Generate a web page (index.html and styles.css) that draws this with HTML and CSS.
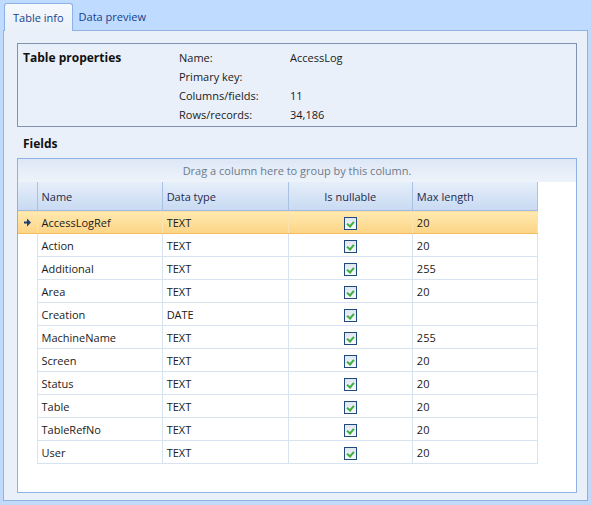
FILE: index.html
```html
<!DOCTYPE html>
<html lang="en">
<head>
  <meta charset="UTF-8">
  <title>Table info</title>
  <link rel="stylesheet" href="styles.css">
</head>
<body>
  <div class="tabs">
    <div class="tab active">Table info</div>
    <div class="tab">Data preview</div>
  </div>

  <div class="panel">
    <div class="props">
      <div class="props-title">Table properties</div>
      <div class="props-list">
        <div class="prop"><span class="prop-label">Name:</span><span>AccessLog</span></div>
        <div class="prop"><span class="prop-label">Primary key:</span><span></span></div>
        <div class="prop"><span class="prop-label">Columns/fields:</span><span>11</span></div>
        <div class="prop"><span class="prop-label">Rows/records:</span><span>34,186</span></div>
      </div>
    </div>

    <div class="fields-title">Fields</div>

    <div class="grid">
      <div class="group-panel">Drag a column here to group by this column.</div>
      <table class="fields">
        <colgroup>
          <col class="c-ind">
          <col class="c-name">
          <col class="c-type">
          <col class="c-null">
          <col class="c-len">
        </colgroup>
        <thead>
          <tr>
            <th class="ind"></th>
            <th>Name</th>
            <th>Data type</th>
            <th class="center">Is nullable</th>
            <th>Max length</th>
          </tr>
        </thead>
        <tbody>
          <tr class="selected">
            <td class="ind"><svg width="7" height="9" viewBox="0 0 7 9"><path d="M0 3.5h3V0.5L7 4.5 3 8.5V5.5H0z" fill="#1b3f73"/></svg></td>
            <td>AccessLogRef</td><td>TEXT</td><td class="center"><span class="check"></span></td><td>20</td>
          </tr>
          <tr><td class="ind"></td><td>Action</td><td>TEXT</td><td class="center"><span class="check"></span></td><td>20</td></tr>
          <tr><td class="ind"></td><td>Additional</td><td>TEXT</td><td class="center"><span class="check"></span></td><td>255</td></tr>
          <tr><td class="ind"></td><td>Area</td><td>TEXT</td><td class="center"><span class="check"></span></td><td>20</td></tr>
          <tr><td class="ind"></td><td>Creation</td><td>DATE</td><td class="center"><span class="check"></span></td><td></td></tr>
          <tr><td class="ind"></td><td>MachineName</td><td>TEXT</td><td class="center"><span class="check"></span></td><td>255</td></tr>
          <tr><td class="ind"></td><td>Screen</td><td>TEXT</td><td class="center"><span class="check"></span></td><td>20</td></tr>
          <tr><td class="ind"></td><td>Status</td><td>TEXT</td><td class="center"><span class="check"></span></td><td>20</td></tr>
          <tr><td class="ind"></td><td>Table</td><td>TEXT</td><td class="center"><span class="check"></span></td><td>20</td></tr>
          <tr><td class="ind"></td><td>TableRefNo</td><td>TEXT</td><td class="center"><span class="check"></span></td><td>20</td></tr>
          <tr><td class="ind"></td><td>User</td><td>TEXT</td><td class="center"><span class="check"></span></td><td>20</td></tr>
        </tbody>
      </table>
    </div>
  </div>
</body>
</html>
```

FILE: styles.css
```css
body {
  margin: 0;
  height: 505px;
  font-family: 'Open Sans', 'Noto Sans', sans-serif;
  font-size: 11px;
  color: #1a1a1a;
  background: #c2dafa;
  display: flex;
  flex-direction: column;
}
.tabs {
  display: flex;
  align-items: flex-end;
  height: 30px;
  padding-left: 4px;
  background: #bfdbff;
}
.tab {
  height: 27px;
  line-height: 27px;
  padding: 0 6px;
  color: #15428b;
}
.tab.active {
  height: 27px;
  padding: 0 8px;
  border: 1px solid #8db2e3;
  border-bottom: none;
  border-radius: 3px 3px 0 0;
  background: linear-gradient(#f6f9fd, #e9f0f9);
  margin-bottom: -1px;
  position: relative;
}
.panel {
  margin: 0 3px;
  height: 471px;
  border: 1px solid #8db2e3;
  background: #e9f0f9;
  padding: 12px 10px 7px 13px;
  box-sizing: border-box;
  display: flex;
  flex-direction: column;
}
.props {
  display: flex;
  height: 84px;
  box-sizing: border-box;
  border: 1px solid #7e93b2;
  padding: 4px 5px;
}
.props-title {
  width: 156px;
  font-weight: 700;
  font-size: 12px;
  line-height: 19px;
  color: #111;
}
.prop {
  height: 19px;
  line-height: 19px;
  display: flex;
}
.prop-label {
  width: 111px;
}
.fields-title {
  height: 31px;
  line-height: 33px;
  padding-left: 6px;
  font-weight: 700;
  font-size: 12px;
  color: #111;
}
.grid {
  flex: 1;
  border: 1px solid #8db2e3;
  background: #ffffff;
}
.group-panel {
  height: 23px;
  line-height: 24px;
  text-align: center;
  color: #6d7a8c;
  background: linear-gradient(#dde8f6, #eef3fa);
}
.fields {
  border-collapse: collapse;
  table-layout: fixed;
  width: 520px;
}
.c-ind { width: 19px; }
.c-name { width: 125px; }
.c-type { width: 126px; }
.c-null { width: 124px; }
.c-len { width: 125px; }
.fields th {
  height: 28px;
  padding: 0 4px;
  text-align: left;
  font-weight: 400;
  color: #1e2a4a;
  background: linear-gradient(#e6eefa, #c8daf2);
  border-left: 1px solid #a9c2e4;
  border-right: 1px solid #a9c2e4;
  border-bottom: 1px solid #9fbbe2;
}
.fields th.ind {
  border-left: none;
}
.fields td {
  height: 22px;
  padding: 0 4px;
  border-left: 1px solid #d8e3f2;
  border-right: 1px solid #d8e3f2;
  border-bottom: 1px solid #d8e3f2;
  white-space: nowrap;
}
.fields td.ind {
  border-left: none;
  border-bottom: none;
  padding: 0 0 0 6px;
}
.fields th.center,
.fields td.center {
  text-align: center;
}
.fields tr.selected td {
  background: linear-gradient(#ffeab0, #fdd486);
  border-bottom: 1px solid #f3bd5c;
  border-left-color: #fbe3b0;
  border-right-color: #fbe3b0;
}
.fields tr.selected td.ind {
  border-bottom: 1px solid #f3bd5c;
}
.check {
  display: inline-block;
  position: relative;
  width: 11px;
  height: 11px;
  border: 1px solid #1f4a80;
  background: linear-gradient(#dfe6ee, #f8fafc);
  vertical-align: middle;
}
.check::after {
  content: "";
  position: absolute;
  left: 3px;
  top: 2px;
  width: 3px;
  height: 5px;
  border-right: 2px solid #3fae3f;
  border-bottom: 2px solid #3fae3f;
  transform: rotate(40deg);
}
```
